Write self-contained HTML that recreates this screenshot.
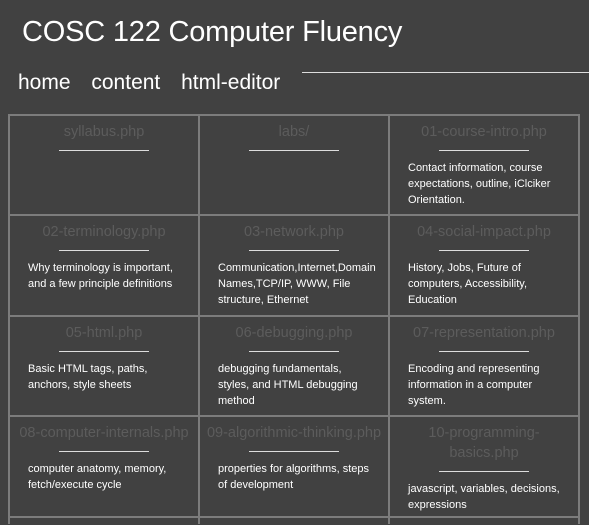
<!DOCTYPE html>
<html style="overflow:hidden;height:525px"><head><style>
body{margin:0;background:#414141;width:589px;height:525px;overflow:hidden;font-family:"Liberation Sans",sans-serif;color:#fff;position:relative}
h1{position:absolute;left:22px;top:16px;margin:0;font-weight:normal;font-size:29px;letter-spacing:-0.2px}
.nav{position:absolute;left:18px;top:71px;font-size:21px}
.nav span{margin-right:15px}
.hr{position:absolute;left:302px;top:72px;width:287px;height:1px;background:#ddd}
.grid{position:absolute;left:8px;top:114px;width:572px;height:410px;background:#7c7c7c;overflow:hidden}
.c{position:absolute;background:#414141;width:188px;height:98px;overflow:hidden}
.h{text-align:center;color:#5c5c5c;font-size:14.5px;margin-top:6px;line-height:20px}
.u{width:90px;height:1px;background:#ddd;margin:8px auto 0}
.d{font-size:11px;line-height:16px;margin:9px 12px 0 18px}
</style></head><body>
<h1>COSC 122 Computer Fluency</h1>
<div class="nav"><span>home</span> <span>content</span> html-editor</div>
<div class="hr"></div>
<div class="grid">
<div class="c" style="left:2px;top:2px"><div class="h">syllabus.php</div><div class="u"></div></div>
<div class="c" style="left:192px;top:2px"><div class="h">labs/</div><div class="u"></div></div>
<div class="c" style="left:382px;top:2px"><div class="h">01-course-intro.php</div><div class="u"></div><div class="d">Contact information, course expectations, outline, iClciker Orientation.</div></div>
<div class="c" style="left:2px;top:102px;height:99px"><div class="h">02-terminology.php</div><div class="u"></div><div class="d">Why terminology is important, and a few principle definitions</div></div>
<div class="c" style="left:192px;top:102px;height:99px"><div class="h">03-network.php</div><div class="u"></div><div class="d" style="margin-right:8px">Communication,Internet,Domain Names,TCP/IP, WWW, File structure, Ethernet</div></div>
<div class="c" style="left:382px;top:102px;height:99px"><div class="h">04-social-impact.php</div><div class="u"></div><div class="d">History, Jobs, Future of computers, Accessibility, Education</div></div>
<div class="c" style="left:2px;top:203px"><div class="h">05-html.php</div><div class="u"></div><div class="d">Basic HTML tags, paths, anchors, style sheets</div></div>
<div class="c" style="left:192px;top:203px"><div class="h">06-debugging.php</div><div class="u"></div><div class="d" style="margin-right:30px">debugging fundamentals, styles, and HTML debugging method</div></div>
<div class="c" style="left:382px;top:203px"><div class="h">07-representation.php</div><div class="u"></div><div class="d">Encoding and representing information in a computer system.</div></div>
<div class="c" style="left:2px;top:303px;height:99px"><div class="h">08-computer-internals.php</div><div class="u"></div><div class="d" style="margin-right:20px">computer anatomy, memory, fetch/execute cycle</div></div>
<div class="c" style="left:192px;top:303px;height:99px"><div class="h">09-algorithmic-thinking.php</div><div class="u"></div><div class="d">properties for algorithms, steps of development</div></div>
<div class="c" style="left:382px;top:303px;height:99px"><div class="h" style="padding:0 30px">10-programming-basics.php</div><div class="u"></div><div class="d">javascript, variables, decisions, expressions</div></div>
<div class="c" style="left:2px;top:404px"></div>
<div class="c" style="left:192px;top:404px"></div>
<div class="c" style="left:382px;top:404px"></div>
</div>
</body></html>
